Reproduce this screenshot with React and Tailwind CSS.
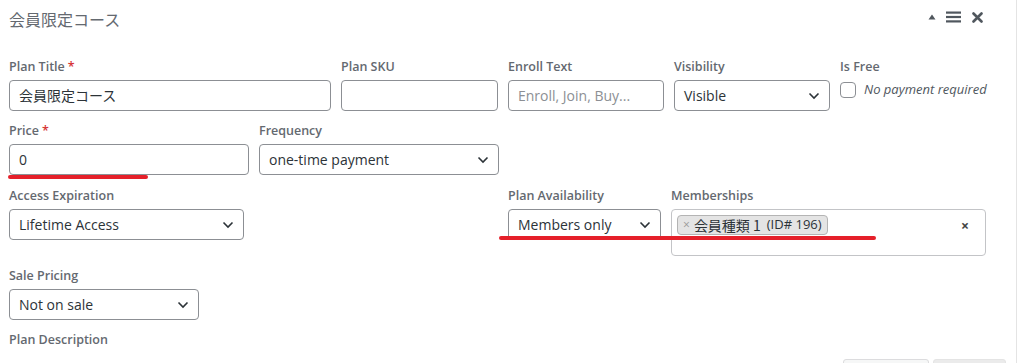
import React from 'react'

const font = { fontFamily: '"Open Sans", "Noto Sans CJK JP", sans-serif' }

function Label({ children, required }) {
  return (
    <div className="text-[12.5px] leading-[16px] font-semibold text-[#646970] mb-[5px] whitespace-nowrap">
      {children}
      {required && <span className="text-[#d63638] ml-[3px]">*</span>}
    </div>
  )
}

function Chevron() {
  return (
    <svg width="12" height="8" viewBox="0 0 12 8" className="shrink-0">
      <path d="M1.5 1.5 L6 6 L10.5 1.5" fill="none" stroke="#2c3338" strokeWidth="1.6" />
    </svg>
  )
}

function TextInput({ value, placeholder }) {
  return (
    <div className="h-[31px] border border-[#8c8f94] rounded-[4px] bg-white flex items-center px-[9px] text-[14px]">
      {value ? (
        <span className="text-[#2c3338]">{value}</span>
      ) : (
        <span className="text-[#8c8f94]">{placeholder}</span>
      )}
    </div>
  )
}

function Select({ value }) {
  return (
    <div className="h-[31px] border border-[#8c8f94] rounded-[4px] bg-white flex items-center justify-between pl-[9px] pr-[9px] text-[14px] text-[#2c3338]">
      <span className="whitespace-nowrap">{value}</span>
      <Chevron />
    </div>
  )
}

function Field({ label, required, width, className = '', children }) {
  return (
    <div className={`${width} shrink-0 ${className}`}>
      <Label required={required}>{label}</Label>
      {children}
    </div>
  )
}

export default function App() {
  return (
    <div style={font} className="relative w-[1017px] h-[363px] overflow-hidden bg-white border-r border-[#e4e4e4]">
      {/* Header */}
      <div className="h-[59px] flex items-start justify-between pl-[9px] pr-[33px] pt-[8px]">
        <h2 className="text-[16px] leading-[22px] text-[#646970]" style={{ fontFamily: '"Noto Sans CJK JP", sans-serif' }}>
          会員限定コース
        </h2>
        <div className="flex items-center gap-[9px] mt-[3px]">
          <svg width="8" height="6" viewBox="0 0 8 6">
            <path d="M4 0.5 L7.5 5.5 L0.5 5.5 Z" fill="#50575e" />
          </svg>
          <svg width="15" height="12" viewBox="0 0 15 12" className="ml-[1px]">
            <rect x="0" y="0.5" width="15" height="2.2" fill="#50575e" />
            <rect x="0" y="4.9" width="15" height="2.2" fill="#50575e" />
            <rect x="0" y="9.3" width="15" height="2.2" fill="#50575e" />
          </svg>
          <svg width="11" height="11" viewBox="0 0 11 11" className="ml-[2px]">
            <path d="M1.5 1.5 L9.5 9.5 M9.5 1.5 L1.5 9.5" stroke="#50575e" strokeWidth="2.6" strokeLinecap="round" />
          </svg>
        </div>
      </div>

      <div className="pl-[9px]">
        {/* Row 1 */}
        <div className="flex gap-[10px] mb-[12px]">
          <Field label="Plan Title" required width="w-[322px]">
            <TextInput value={<span style={{ fontFamily: '"Noto Sans CJK JP", sans-serif' }}>会員限定コース</span>} />
          </Field>
          <Field label="Plan SKU" width="w-[157px]">
            <TextInput value="" placeholder="" />
          </Field>
          <Field label="Enroll Text" width="w-[156px]">
            <TextInput placeholder="Enroll, Join, Buy..." />
          </Field>
          <Field label="Visibility" width="w-[156px]">
            <Select value="Visible" />
          </Field>
          <Field label="Is Free" width="w-[160px]">
            <div className="flex items-center gap-[8px] h-[20px]">
              <div className="w-[16px] h-[16px] border border-[#8c8f94] rounded-[4px] bg-white" />
              <span className="italic text-[13px] text-[#50575e] whitespace-nowrap">No payment required</span>
            </div>
          </Field>
        </div>

        {/* Row 2 */}
        <div className="flex gap-[10px] mb-[13px]">
          <Field label="Price" required width="w-[240px]">
            <TextInput value="0" />
          </Field>
          <Field label="Frequency" width="w-[240px]">
            <Select value="one-time payment" />
          </Field>
        </div>

        {/* Row 3 */}
        <div className="flex mb-[12px]">
          <Field label="Access Expiration" width="w-[235px]">
            <Select value="Lifetime Access" />
          </Field>
          <Field label="Plan Availability" width="w-[153px]" className="ml-[264px]">
            <Select value="Members only" />
          </Field>
          <Field label="Memberships" width="w-[315px]" className="ml-[10px]">
            <div className="h-[47px] border border-[#c3c4c7] rounded-[4px] bg-white flex items-start justify-between pl-[5px] pr-[16px] pt-[5px]">
              <div className="h-[20px] flex items-center bg-[#e4e4e4] border border-[#b4b4b4] rounded-[4px] px-[5px] text-[14px] text-[#2c3338] whitespace-nowrap">
                <span className="text-[#999] text-[12px] mr-[4px]">×</span>
                <span style={{ fontFamily: '"Noto Sans CJK JP", sans-serif' }}>会員種類 1</span>
                <span className="ml-[6px] text-[13px]">(ID# 196)</span>
              </div>
              <span className="text-[14px] font-bold text-[#444] leading-[20px] mt-[1px]">×</span>
            </div>
          </Field>
        </div>

        {/* Row 4 */}
        <div className="flex mb-[12px]">
          <Field label="Sale Pricing" width="w-[190px]">
            <Select value="Not on sale" />
          </Field>
        </div>

        <Label>Plan Description</Label>
        <div className="flex justify-end gap-[4px] pr-[10px] mt-[11px]">
          <div className="w-[86px] h-[20px] bg-[#f6f7f7] border border-[#dcdcde] rounded-t-[3px]" />
          <div className="w-[73px] h-[20px] bg-[#ebebeb] border border-[#e4e4e4] rounded-t-[3px]" />
        </div>
      </div>

      {/* annotation underlines */}
      <div className="absolute left-[8px] top-[175px] w-[140px] h-[4px] rounded-full bg-[#e5202a]" />
      <div className="absolute left-[499px] top-[236px] w-[377px] h-[4px] rounded-full bg-[#e5202a]" />
    </div>
  )
}
